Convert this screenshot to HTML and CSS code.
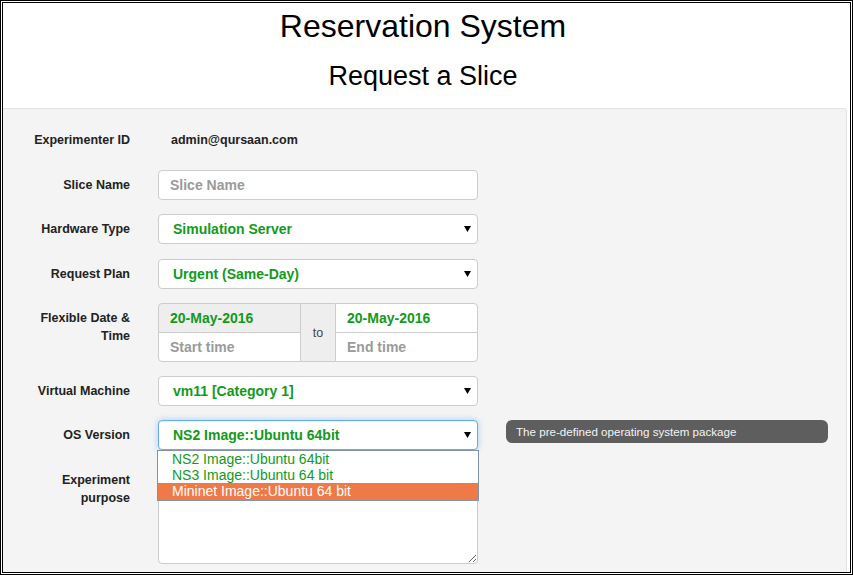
FILE: index.html
```html
<!DOCTYPE html>
<html lang="en">
<head>
<meta charset="utf-8">
<title>Reservation System</title>
<link rel="stylesheet" href="styles.css">
</head>
<body>
<div class="frame">
  <header class="header">
    <h1 class="title">Reservation System</h1>
    <h2 class="subtitle">Request a Slice</h2>
  </header>
  <section class="panel">
    <form class="form">
      <label class="label">Experimenter ID</label>
      <div class="static">admin@qursaan.com</div>

      <label class="label">Slice Name</label>
      <input class="input" type="text" placeholder="Slice Name">

      <label class="label">Hardware Type</label>
      <div class="select"><span>Simulation Server</span><svg class="caret" viewBox="0 0 7 6"><path d="M0 0H7L3.5 6Z"/></svg></div>

      <label class="label">Request Plan</label>
      <div class="select"><span>Urgent (Same-Day)</span><svg class="caret" viewBox="0 0 7 6"><path d="M0 0H7L3.5 6Z"/></svg></div>

      <label class="label">Flexible Date &amp; Time</label>
      <div class="dates">
        <div class="date-col">
          <input class="input date-top date-left readonly" type="text" value="20-May-2016" readonly>
          <input class="input date-bottom date-left" type="text" placeholder="Start time">
        </div>
        <div class="addon">to</div>
        <div class="date-col">
          <input class="input date-top date-right" type="text" value="20-May-2016">
          <input class="input date-bottom date-right" type="text" placeholder="End time">
        </div>
      </div>

      <label class="label">Virtual Machine</label>
      <div class="select"><span>vm11 [Category 1]</span><svg class="caret" viewBox="0 0 7 6"><path d="M0 0H7L3.5 6Z"/></svg></div>

      <label class="label">OS Version</label>
      <div class="select focus">
        <span>NS2 Image::Ubuntu 64bit</span><svg class="caret" viewBox="0 0 7 6"><path d="M0 0H7L3.5 6Z"/></svg>
        <ul class="options">
          <li class="option">NS2 Image::Ubuntu 64bit</li>
          <li class="option">NS3 Image::Ubuntu 64 bit</li>
          <li class="option active">Mininet Image::Ubuntu 64 bit</li>
        </ul>
      </div>
      <div class="tip">The pre-defined operating system package</div>

      <label class="label">Experiment purpose</label>
      <textarea class="textarea"></textarea>
    </form>
  </section>
</div>
</body>
</html>
```
FILE: styles.css
```css
* { box-sizing: border-box; }

html, body {
  margin: 0;
  padding: 0;
  background: #fff;
}

body {
  font-family: "Liberation Sans", Arial, sans-serif;
  color: #222;
}

.frame {
  width: 853px;
  height: 575px;
  border: 3px double #000;
  overflow: hidden;
  background: #fff;
}

.header {
  padding: 5px 7px 17px 0;
  text-align: center;
}

.title {
  margin: 0;
  font-size: 32px;
  line-height: 36px;
  font-weight: 400;
  color: #000;
}

.subtitle {
  margin: 17px 0 0;
  font-size: 27px;
  line-height: 30px;
  font-weight: 400;
  color: #000;
}

.panel {
  margin-right: 3px;
  height: 470px;
  background: #f4f4f4;
  border-top: 1px solid #e3e3e3;
  border-right: 1px solid #e3e3e3;
  border-top-right-radius: 4px;
  padding-top: 16px;
}

.form {
  display: grid;
  grid-template-columns: 127px 320px 322px;
  column-gap: 28px;
  row-gap: 14.5px;
  align-items: start;
}

.label {
  grid-column: 1;
  padding: 6px 0 0 22px;
  text-align: right;
  font-size: 12.5px;
  line-height: 18px;
  font-weight: 700;
  color: #222;
}

.static {
  grid-column: 2;
  height: 30px;
  padding: 6px 0 0 13px;
  font-size: 12.5px;
  line-height: 18px;
  font-weight: 700;
  color: #222;
}

.input {
  grid-column: 2;
  display: block;
  width: 100%;
  height: 30px;
  margin: 0;
  padding: 0 10px 0 11px;
  border: 1px solid #ccc;
  border-radius: 4px;
  background: #fff;
  font-family: "Liberation Sans", Arial, sans-serif;
  font-size: 14px;
  font-weight: 700;
  color: #129a1c;
  outline: none;
}

.input::placeholder {
  color: #9a9a9a;
  opacity: 1;
}

.select {
  grid-column: 2;
  position: relative;
  display: flex;
  align-items: center;
  justify-content: space-between;
  height: 30px;
  padding: 0 6px 0 14px;
  border: 1px solid #ccc;
  border-radius: 4px;
  background: #fff;
  font-size: 14px;
  font-weight: 700;
  color: #129a1c;
}

.caret {
  width: 7px;
  height: 6px;
  fill: #000;
}

.select.focus {
  border-color: #66afe9;
  box-shadow: inset 0 1px 1px rgba(0, 0, 0, .075), 0 0 6px rgba(102, 175, 233, .55);
}

.options {
  position: absolute;
  z-index: 2;
  top: 29px;
  left: -2px;
  width: 322px;
  margin: 0;
  padding: 0;
  list-style: none;
  background: #fff;
  border: 1px solid #7f93ab;
}

.option {
  height: 16px;
  padding-left: 14px;
  font-size: 14px;
  line-height: 16px;
  font-weight: 400;
  color: #129a1c;
}

.option.active {
  height: 17px;
  line-height: 17px;
  background: #f07948;
  color: #fff;
}

.tip {
  grid-column: 3;
  height: 23px;
  padding-left: 10px;
  border-radius: 6px;
  background: #5e5e5e;
  color: #f4f4f4;
  font-size: 11.6px;
  line-height: 23px;
}

.dates {
  grid-column: 2;
  display: flex;
  height: 59px;
  margin-bottom: -1px;
}

.date-col {
  display: flex;
  flex-direction: column;
  width: 143px;
}

.date-col .input {
  height: 30px;
}

.date-bottom {
  margin-top: -1px;
}

.date-left.date-top { border-radius: 4px 0 0 0; }
.date-left.date-bottom { border-radius: 0 0 0 4px; }
.date-right.date-top { border-radius: 0 4px 0 0; }
.date-right.date-bottom { border-radius: 0 0 4px 0; }

.readonly {
  background: #eee;
}

.addon {
  width: 34px;
  display: flex;
  align-items: center;
  justify-content: center;
  background: #eee;
  border-top: 1px solid #ccc;
  border-bottom: 1px solid #ccc;
  font-size: 12.5px;
  color: #444;
}

.textarea {
  grid-column: 2;
  display: block;
  width: 100%;
  height: 99px;
  margin: 0;
  border: 1px solid #ccc;
  border-radius: 4px;
  background: #fff;
  resize: vertical;
  font-family: "Liberation Sans", Arial, sans-serif;
}
```
